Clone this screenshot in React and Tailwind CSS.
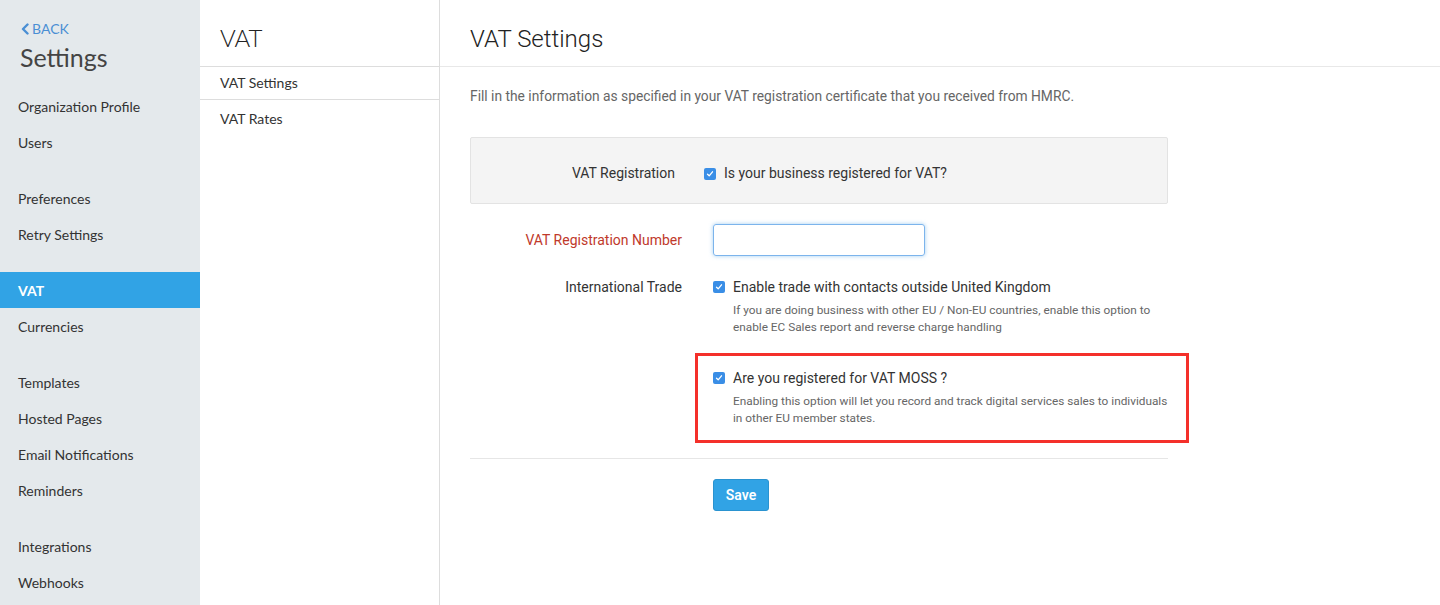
import React, { useState } from "react";

const navGroups = [
  ["Organization Profile", "Users"],
  ["Preferences", "Retry Settings"],
  ["VAT", "Currencies"],
  ["Templates", "Hosted Pages", "Email Notifications", "Reminders"],
  ["Integrations", "Webhooks"],
];

const Check = ({ checked, onChange }) => (
  <button
    type="button"
    onClick={onChange}
    className={`w-[12px] h-[12px] rounded-[2px] flex items-center justify-center shrink-0 ${
      checked ? "bg-[#3a8ee6]" : "bg-white border border-[#aaa]"
    }`}
  >
    {checked && (
      <svg width="8" height="8" viewBox="0 0 8 8" fill="none">
        <path d="M1.5 4.2 L3.2 5.8 L6.5 1.8" stroke="white" strokeWidth="1.3" strokeLinecap="round" strokeLinejoin="round" />
      </svg>
    )}
  </button>
);

export default function App() {
  const [registered, setRegistered] = useState(true);
  const [intl, setIntl] = useState(true);
  const [moss, setMoss] = useState(true);
  const [vatNo, setVatNo] = useState("");

  return (
    <div className="flex h-[605px] w-[1440px] overflow-hidden bg-white text-[#333]" style={{ fontFamily: "Lato, 'Open Sans', sans-serif" }}>
      {/* Settings sidebar */}
      <aside className="w-[200px] shrink-0 bg-[#e4e9ec]">
        <div className="pl-[20px] pt-[20px]">
          <a className="flex items-center gap-[2px] text-[14px] text-[#4a8fd4] leading-[18px]">
            <svg width="10" height="12" viewBox="0 0 10 12">
              <path d="M7.5 1.5 L3 6 L7.5 10.5" stroke="#4a8fd4" strokeWidth="2.4" fill="none" strokeLinecap="round" strokeLinejoin="round" />
            </svg>
            BACK
          </a>
          <h1 className="text-[25px] text-[#444] leading-[30px] mt-[4px]">Settings</h1>
        </div>
        <nav className="mt-[16px]">
          {navGroups.map((group, gi) => (
            <div key={gi} className="mb-[20px]">
              {group.map((item) => (
                <div
                  key={item}
                  className={`h-[36px] flex items-center pl-[18px] text-[14px] ${
                    item === "VAT" ? "bg-[#31a3e5] text-white font-bold" : "text-[#333]"
                  }`}
                >
                  {item}
                </div>
              ))}
            </div>
          ))}
        </nav>
      </aside>

      {/* VAT sub-menu */}
      <div className="w-[240px] shrink-0 border-r border-[#ddd]">
        <div className="h-[67px] border-b border-[#ddd] pl-[20px] pt-[23px] text-[24px] leading-[30px] font-light text-[#222]">VAT</div>
        <div className="h-[33px] border-b border-[#ddd] pl-[20px] pb-[2px] flex items-center text-[14px]">VAT Settings</div>
        <div className="h-[37px] pl-[20px] flex items-center text-[14px]">VAT Rates</div>
      </div>

      {/* Main */}
      <main className="flex-1" style={{ fontFamily: "Roboto, 'Liberation Sans', sans-serif" }}>
        <div className="h-[67px] border-b border-[#e8e8e8] pl-[30px] pt-[24px] text-[24px] leading-[30px] font-light text-[#222]">
          VAT Settings
        </div>
        <div className="pl-[30px]">
          <p className="mt-[20px] text-[13.8px] text-[#666] leading-[18px]">
            Fill in the information as specified in your VAT registration certificate that you received from HMRC.
          </p>

          <div className="w-[698px] mt-[32px]">
            <div className="h-[67px] bg-[#f4f4f4] border border-[#e3e3e3] rounded-[2px] flex items-center pt-[6px]">
              <label className="w-[204px] text-right text-[14px] text-[#333]">VAT Registration</label>
              <div className="ml-[29px] flex items-center gap-[8px]">
                <Check checked={registered} onChange={() => setRegistered(!registered)} />
                <span className="text-[14px]">Is your business registered for VAT?</span>
              </div>
            </div>

            <div className="flex items-center mt-[20px]">
              <label className="w-[212px] text-right text-[14px] text-[#c0392b]">VAT Registration Number</label>
              <input
                value={vatNo}
                onChange={(e) => setVatNo(e.target.value)}
                className="ml-[31px] w-[212px] h-[32px] rounded-[3px] border border-[#7cb4ec] shadow-[0_0_4px_rgba(102,175,233,0.6)] px-2 text-[14px] outline-none"
              />
            </div>

            <div className="flex mt-[22px]">
              <label className="w-[212px] text-right text-[14px] leading-[18px]">International Trade</label>
              <div className="ml-[31px]">
                <div className="flex items-center gap-[8px] h-[18px]">
                  <Check checked={intl} onChange={() => setIntl(!intl)} />
                  <span className="text-[14px]">Enable trade with contacts outside United Kingdom</span>
                </div>
                <p className="pl-[20px] mt-[6px] text-[11.8px] leading-[16.5px] text-[#666] w-[450px]">
                  If you are doing business with other EU / Non-EU countries, enable this option to enable EC Sales report and reverse charge handling
                </p>
              </div>
            </div>

            <div className="ml-[225px] mt-[18px] w-[494px] h-[90px] border-[3px] border-[#f4302a] pl-[15px] pt-[13px]">
              <div className="flex items-center gap-[8px] h-[18px]">
                <Check checked={moss} onChange={() => setMoss(!moss)} />
                <span className="text-[14px]">Are you registered for VAT MOSS ?</span>
              </div>
              <p className="pl-[20px] mt-[6px] text-[11.8px] leading-[16.5px] text-[#666] w-[462px]">
                Enabling this option will let you record and track digital services sales to individuals in other EU member states.
              </p>
            </div>

            <div className="border-t border-[#e6e6e6] mt-[15px] pt-[20px]">
              <button className="ml-[243px] h-[32px] w-[56px] rounded-[3px] bg-[#31a3e5] border border-[#2a93d0] text-white text-[14px] font-semibold">
                Save
              </button>
            </div>
          </div>
        </div>
      </main>
    </div>
  );
}
